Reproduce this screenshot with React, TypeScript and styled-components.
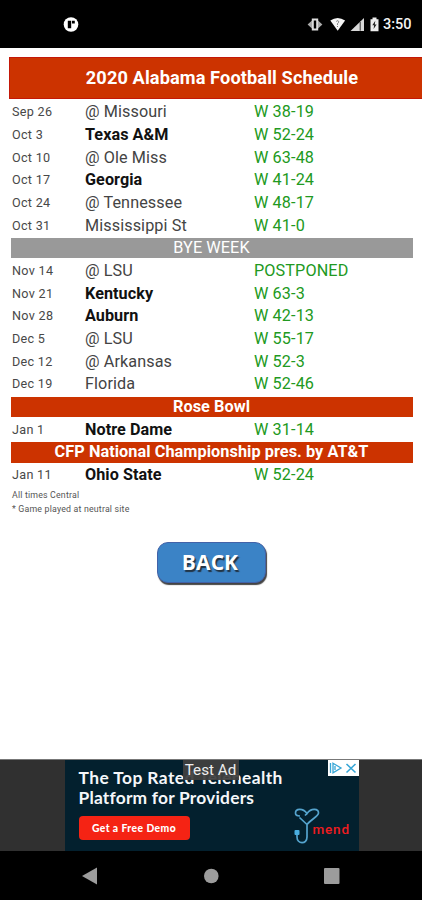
import React from "react";
import styled, { createGlobalStyle } from "styled-components";

const GlobalStyle = createGlobalStyle`
  * { box-sizing: border-box; }
  body { margin: 0; background: #fff; font-family: Roboto, sans-serif; }
`;

const Screen = styled.div`
  width: 422px;
  height: 900px;
  display: flex;
  flex-direction: column;
  overflow: hidden;
  background: #fff;
`;

const StatusBar = styled.header`
  height: 48px;
  flex: none;
  background: #000;
  display: flex;
  justify-content: space-between;
  padding: 0 10px 0 63px;
`;

const StatusIcons = styled.svg`
  display: block;
  height: 48px;
`;

const StatusRight = styled.div`
  display: flex;
`;

const Clock = styled.span`
  color: #f4f4f4;
  font-size: 14.5px;
  font-weight: 500;
  line-height: 50px;
  width: 29px;
  white-space: nowrap;
`;

const Content = styled.main`
  flex: 1;
  min-height: 0;
  display: flex;
  flex-direction: column;
`;

const Title = styled.h1`
  margin: 9px 0 1.6px 9px;
  height: 42px;
  flex: none;
  padding-left: 12px;
  background: #cc3300;
  border: 1px solid #c41808;
  border-right: 0;
  color: #fff;
  font-size: 18.2px;
  letter-spacing: 0.1px;
  font-weight: 700;
  line-height: 40px;
  text-align: center;
  white-space: nowrap;
`;

const Schedule = styled.div`
  display: flex;
  flex-direction: column;
  margin: 0 9px 0 11px;
`;

const GameRow = styled.div`
  height: 22.7px;
  display: grid;
  grid-template-columns: 73px 169px 1fr;
  align-items: center;
  padding: 0 0 0.6px 1px;
  white-space: nowrap;
`;

const GameDate = styled.span`
  color: #484848;
  font-size: 12.6px;
  letter-spacing: 0.3px;
`;

const Opponent = styled.span<{ $home?: boolean }>`
  color: ${(p) => (p.$home ? "#111" : "#444")};
  font-size: 16.2px;
  font-weight: ${(p) => (p.$home ? 700 : 400)};
  letter-spacing: ${(p) => (p.$home ? "0.05px" : "0.1px")};
`;

const Result = styled.span`
  color: #219921;
  font-size: 16.2px;
  letter-spacing: 0.12px;
`;

const Banner = styled.div<{ $bye?: boolean }>`
  height: 20.7px;
  margin: 1px 0;
  padding-right: 1px;
  background: ${(p) => (p.$bye ? "#999" : "#cc3300")};
  color: #fff;
  font-size: 16.3px;
  letter-spacing: 0.05px;
  font-weight: ${(p) => (p.$bye ? 400 : 700)};
  line-height: 20.6px;
  text-align: center;
  white-space: nowrap;
`;

const Notes = styled.div`
  padding: 1.6px 0 0 12px;
  color: #555;
  font-size: 8.8px;
  line-height: 14px;
  letter-spacing: 0.18px;
`;

const BackButton = styled.button`
  align-self: center;
  width: 109px;
  height: 41px;
  margin-top: 25.8px;
  padding: 0 2px 0 0;
  border: 1px solid #4262a8;
  border-radius: 11px;
  background: #3b83c6;
  box-shadow: 1px 2px 1px #444;
  color: #fff;
  font: 700 21px "Open Sans", sans-serif;
  letter-spacing: 0.1px;
  text-shadow: 1.5px 1.5px 1px #234;
`;

const AdStrip = styled.section`
  height: 92px;
  flex: none;
  display: flex;
  justify-content: center;
  background: #303030;
  border-top: 1px solid #777;
`;

const AdCard = styled.div`
  position: relative;
  width: 294px;
  margin-left: 1px;
  padding: 8px 0 0 14px;
  background: #03202e;
`;

const AdHeadline = styled.div<{ $spacing: number }>`
  color: #f5f7fa;
  font: 700 17.4px/20px Lato, sans-serif;
  letter-spacing: ${(p) => p.$spacing}px;
  white-space: nowrap;
`;

const AdAction = styled.div`
  width: 111px;
  height: 24px;
  margin-top: 8px;
  border-radius: 4px;
  background: #f52314;
  color: #fff;
  font: 900 10.3px/24px Lato, sans-serif;
  letter-spacing: 0.45px;
  text-align: center;
`;

const TestLabel = styled.div`
  position: absolute;
  left: 118px;
  top: 0;
  width: 56px;
  height: 20px;
  background: rgba(64, 64, 64, 0.94);
  color: #eee;
  font-size: 15.2px;
  line-height: 21px;
  text-align: center;
  white-space: nowrap;
`;

const AdChoices = styled.svg`
  position: absolute;
  right: 0;
  top: 0;
`;

const MendLogo = styled.div`
  position: absolute;
  left: 227px;
  top: 48px;
  display: flex;
  color: #ee1c20;
  font: 500 13.5px/26px Roboto, sans-serif;
  letter-spacing: 0.8px;
`;

const MendWord = styled.span`
  margin-left: -7px;
  padding-top: 8px;
`;

const NavBar = styled.nav`
  height: 49px;
  flex: none;
  display: flex;
  justify-content: space-between;
  padding: 0 81px;
  background: #000;
`;

type Entry =
  | { kind: "game"; date: string; opponent: string; result: string; home?: boolean }
  | { kind: "banner"; label: string; bye?: boolean };

const game = (date: string, opponent: string, result: string, home = false): Entry => ({
  kind: "game", date, opponent, result, home,
});

const entries: Entry[] = [
  game("Sep 26", "@ Missouri", "W 38-19"),
  game("Oct 3", "Texas A&M", "W 52-24", true),
  game("Oct 10", "@ Ole Miss", "W 63-48"),
  game("Oct 17", "Georgia", "W 41-24", true),
  game("Oct 24", "@ Tennessee", "W 48-17"),
  game("Oct 31", "Mississippi St", "W 41-0"),
  { kind: "banner", label: "BYE WEEK", bye: true },
  game("Nov 14", "@ LSU", "POSTPONED"),
  game("Nov 21", "Kentucky", "W 63-3", true),
  game("Nov 28", "Auburn", "W 42-13", true),
  game("Dec 5", "@ LSU", "W 55-17"),
  game("Dec 12", "@ Arkansas", "W 52-3"),
  game("Dec 19", "Florida", "W 52-46"),
  { kind: "banner", label: "Rose Bowl" },
  game("Jan 1", "Notre Dame", "W 31-14", true),
  { kind: "banner", label: "CFP National Championship pres. by AT&T" },
  game("Jan 11", "Ohio State", "W 52-24", true),
];

export default function App() {
  return (
    <Screen>
      <GlobalStyle />
      <StatusBar>
        <StatusIcons width="16" viewBox="0 0 16 48">
          <circle cx="8" cy="24.5" r="7.3" fill="#fff" />
          <path d="M4.8 20.7h3.4v7.6H4.8zM9 20.7h2.8v2.9H9z" fill="#000" />
        </StatusIcons>
        <StatusRight>
          <StatusIcons width="76" viewBox="307 0 76 48">
            <path d="M312.8 19.5h4.4v10h-4.4z" fill="none" stroke="#ddd" strokeWidth="2" />
            <path d="M312 20.5l-4.4 4 4.4 4zM318 20.5l4.4 4-4.4 4z" fill="#aaa" />
            <path d="M330.3 20.5q7.4-5.2 14.8 0l-7.4 10.3z" fill="#f4f4f4" />
            <path d="M336.3 21.4q1.5-1.4 2.4 0 .2 1.2-1.2 2.3v1.2m0 1.1v1" fill="none" stroke="#777" strokeWidth="1" />
            <path d="M350.5 31l13.5-13V31z" fill="#d8d8d8" />
            <path d="M360.2 22v8.7" stroke="#333" strokeWidth="1" />
            <path d="M370.5 19.2h2v-1.6h4v1.6h2v12h-8z" fill="#eee" />
            <path d="M375.3 20.8l-3 4.5h1.8l-.5 3.8 3-4.7h-1.8z" fill="#222" />
          </StatusIcons>
          <Clock>3:50</Clock>
        </StatusRight>
      </StatusBar>
      <Content>
        <Title>2020 Alabama Football Schedule</Title>
        <Schedule>
          {entries.map((e) =>
            e.kind === "banner" ? (
              <Banner key={e.label} $bye={e.bye}>{e.label}</Banner>
            ) : (
              <GameRow key={e.date}>
                <GameDate>{e.date}</GameDate>
                <Opponent $home={e.home}>{e.opponent}</Opponent>
                <Result>{e.result}</Result>
              </GameRow>
            )
          )}
        </Schedule>
        <Notes>
          <div>All times Central</div>
          <div>* Game played at neutral site</div>
        </Notes>
        <BackButton>BACK</BackButton>
      </Content>
      <AdStrip>
        <AdCard>
          <AdHeadline $spacing={0.42}>The Top Rated Telehealth</AdHeadline>
          <AdHeadline $spacing={0.2}>Platform for Providers</AdHeadline>
          <AdAction>Get a Free Demo</AdAction>
          <TestLabel>Test Ad</TestLabel>
          <AdChoices width="31" height="16" viewBox="0 0 31 16">
            <path d="M0 0h31v16H0z" fill="#fff" />
            <path d="M2.5 3v10M5 3.2L13 8l-8 4.8zM7 6v4" fill="none" stroke="#35a5d6" strokeWidth="1.3" />
            <path d="M18.5 4l9 8.5M27.5 4l-9 8.5" stroke="#35a5d6" strokeWidth="1.6" />
          </AdChoices>
          <MendLogo>
            <svg width="28" height="38" viewBox="0 0 28 38">
              <path d="M8 8Q3.5 8 3.5 5C3.5.8 10.5-.5 15 5.5 19.5-.5 26.5.8 26.5 5c0 3.5-8 6.5-11.5 11.5v12.5c0 7.8-10 7.3-10 0v-2.7M15 16.5L7.5 9.5M15 5.5l-2 2" fill="none" stroke="#55a4ce" strokeWidth="1.7" />
              <rect x="2.5" y="22" width="5" height="5" rx="1" fill="#49aee0" />
            </svg>
            <MendWord>mend</MendWord>
          </MendLogo>
        </AdCard>
      </AdStrip>
      <NavBar>
        <svg width="18" height="49" viewBox="0 0 18 49"><path d="M1 25l15-8.5v17z" fill="#9c9c9c" /></svg>
        <svg width="18" height="49" viewBox="0 0 18 49"><circle cx="9.3" cy="25" r="7.3" fill="#9c9c9c" /></svg>
        <svg width="18" height="49" viewBox="0 0 18 49"><rect x="1" y="17" width="15.5" height="16" rx="1" fill="#9c9c9c" /></svg>
      </NavBar>
    </Screen>
  );
}
